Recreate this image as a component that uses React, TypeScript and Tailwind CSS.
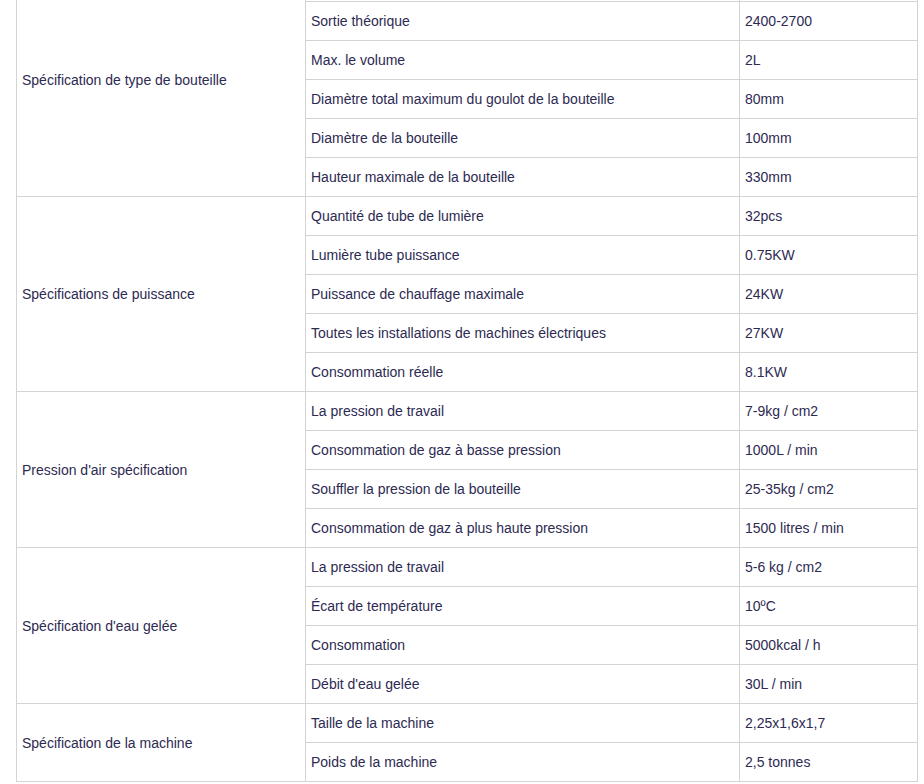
import React from "react";

type Group = { label: string; rows: [string, string][] };

const groups: Group[] = [
  {
    label: "Spécification de type de bouteille",
    rows: [
      ["", ""],
      ["Sortie théorique", "2400-2700"],
      ["Max. le volume", "2L"],
      ["Diamètre total maximum du goulot de la bouteille", "80mm"],
      ["Diamètre de la bouteille", "100mm"],
      ["Hauteur maximale de la bouteille", "330mm"],
    ],
  },
  {
    label: "Spécifications de puissance",
    rows: [
      ["Quantité de tube de lumière", "32pcs"],
      ["Lumière tube puissance", "0.75KW"],
      ["Puissance de chauffage maximale", "24KW"],
      ["Toutes les installations de machines électriques", "27KW"],
      ["Consommation réelle", "8.1KW"],
    ],
  },
  {
    label: "Pression d'air spécification",
    rows: [
      ["La pression de travail", "7-9kg / cm2"],
      ["Consommation de gaz à basse pression", "1000L / min"],
      ["Souffler la pression de la bouteille", "25-35kg / cm2"],
      ["Consommation de gaz à plus haute pression", "1500 litres / min"],
    ],
  },
  {
    label: "Spécification d'eau gelée",
    rows: [
      ["La pression de travail", "5-6 kg / cm2"],
      ["Écart de température", "10ºC"],
      ["Consommation", "5000kcal / h"],
      ["Débit d'eau gelée", "30L / min"],
    ],
  },
  {
    label: "Spécification de la machine",
    rows: [
      ["Taille de la machine", "2,25x1,6x1,7"],
      ["Poids de la machine", "2,5 tonnes"],
    ],
  },
];

export default function App() {
  return (
    <div
      className="w-[924px] h-[784px] overflow-hidden bg-white pl-[16px]"
      style={{ fontFamily: '"Liberation Sans", Arial, sans-serif' }}
    >
      <table className="-mt-[38px] w-[901px] table-fixed border-collapse text-[14px] text-[#2d2a52]">
        <colgroup>
          <col className="w-[289px]" />
          <col className="w-[434px]" />
          <col className="w-[178px]" />
        </colgroup>
        <tbody>
          {groups.map((g) =>
            g.rows.map((r, i) => (
              <tr key={g.label + i} className="h-[39px]">
                {i === 0 && (
                  <td
                    rowSpan={g.rows.length}
                    className="border border-[#d3d3d3] pl-[5px] pr-[5px] pt-[1px] pb-0 align-middle"
                  >
                    {g.label}
                  </td>
                )}
                <td className="border border-[#d3d3d3] pl-[5px] pr-[5px] pt-[1px] pb-0 align-middle">
                  {r[0]}
                </td>
                <td className="border border-[#d3d3d3] pl-[5px] pr-[5px] pt-[1px] pb-0 align-middle">
                  {r[1]}
                </td>
              </tr>
            ))
          )}
        </tbody>
      </table>
    </div>
  );
}
